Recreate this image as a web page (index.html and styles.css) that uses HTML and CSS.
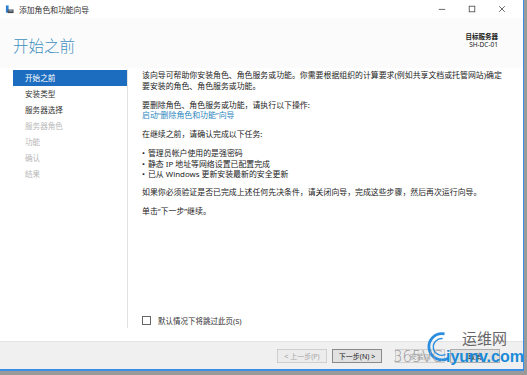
FILE: index.html
```html
<!DOCTYPE html>
<html lang="zh-CN">
<head>
    <meta charset="UTF-8">
    <link rel="stylesheet" href="styles.css">
</head>
<body>

<div class="window">
    <!-- Barra de título -->
    <div class="titlebar">
        <svg class="app-icon" viewBox="0 0 10 10">
            <rect x="1" y="0.5" width="3" height="8" fill="#2b7fd4"/>
            <rect x="3" y="5" width="6.5" height="4" fill="#4a4a4a"/>
            <rect x="4" y="6" width="4.5" height="1" fill="#9ec6ee"/>
        </svg>
        <span class="title-text">添加角色和功能向导</span>
        <div class="controls">
            <span class="ctrl">
                <svg viewBox="0 0 10 10"><line x1="1" y1="5.5" x2="9" y2="5.5" stroke="#444" stroke-width="1"/></svg>
            </span>
            <span class="ctrl">
                <svg viewBox="0 0 10 10"><rect x="1.5" y="1.5" width="7" height="7" fill="none" stroke="#444" stroke-width="1"/></svg>
            </span>
            <span class="ctrl">
                <svg viewBox="0 0 10 10"><path d="M1.5 1.5L8.5 8.5M8.5 1.5L1.5 8.5" stroke="#444" stroke-width="1"/></svg>
            </span>
        </div>
    </div>

    <!-- Cabecera -->
    <div class="header">
        <h1 class="page-title">开始之前</h1>
        <div class="target">
            <div class="target-label">目标服务器</div>
            <div class="target-name">SH-DC-01</div>
        </div>
    </div>

    <!-- Cuerpo -->
    <div class="main">
        <ul class="steps">
            <li class="step active">开始之前</li>
            <li class="step">安装类型</li>
            <li class="step">服务器选择</li>
            <li class="step disabled">服务器角色</li>
            <li class="step disabled">功能</li>
            <li class="step disabled">确认</li>
            <li class="step disabled">结果</li>
        </ul>

        <div class="content">
            <p>该向导可帮助你安装角色、角色服务或功能。你需要根据组织的计算要求(例如共享文档或托管网站)确定<br>要安装的角色、角色服务或功能。</p>
            <p>要删除角色、角色服务或功能，请执行以下操作:<br><a class="link" href="#">启动“删除角色和功能”向导</a></p>
            <p>在继续之前，请确认完成以下任务:</p>
            <ul class="tasks">
                <li>管理员帐户使用的是强密码</li>
                <li>静态 IP 地址等网络设置已配置完成</li>
                <li>已从 Windows 更新安装最新的安全更新</li>
            </ul>
            <p>如果你必须验证是否已完成上述任何先决条件，请关闭向导，完成这些步骤，然后再次运行向导。</p>
            <p>单击“下一步”继续。</p>

            <label class="skip">
                <span class="checkbox"></span>
                默认情况下将跳过此页(S)
            </label>
        </div>
    </div>

    <!-- Pie con botones -->
    <div class="footer">
        <button class="btn" disabled>&lt; 上一步(P)</button>
        <button class="btn primary">下一步(N) &gt;</button>
        <button class="btn install" disabled>安装(I)</button>
        <button class="btn">取消</button>
    </div>

    <!-- Marca de agua -->
    <div class="watermark">
        <svg class="wm-logo" viewBox="0 0 30 36">
            <path d="M22 4 A14 14 0 1 0 26 30" fill="none" stroke="#2a8ee0" stroke-width="3"/>
            <path d="M20 9 A9 9 0 1 0 23 26" fill="none" stroke="#2a8ee0" stroke-width="1.5"/>
        </svg>
        <span class="wm-cn">运维网</span>
        <span class="wm-num">365VC</span>
        <span class="wm-url">iyunv.com</span>
    </div>
</div>

</body>
</html>
```

FILE: styles.css
```css
/* Generales */
body {
    margin: 0;
    width: 527px;
    height: 375px;
    background-color: #9a9a9a;
    font-family: "Noto Sans", "Noto Sans CJK SC", sans-serif;
    overflow: hidden;
}

.window {
    position: relative;
    width: 523px;
    height: 369px;
    background: white;
    border-right: 1px solid #3a8ee6;
    border-bottom: 2px solid #3a8ee6;
    display: flex;
    flex-direction: column;
}

/* Barra de título */
.titlebar {
    height: 18px;
    display: flex;
    align-items: center;
    padding-left: 5px;
    flex-shrink: 0;
}

.app-icon {
    width: 9px;
    height: 9px;
}

.title-text {
    margin-left: 5px;
    font-size: 7.8px;
    color: #333;
}

.controls {
    margin-left: auto;
    display: flex;
    padding-right: 6px;
}

.ctrl {
    width: 30px;
    height: 18px;
    display: flex;
    align-items: center;
    justify-content: center;
}

.ctrl svg {
    width: 8px;
    height: 8px;
}

/* Cabecera */
.header {
    height: 50px;
    flex-shrink: 0;
    background: #fbfbfb;
    display: flex;
    align-items: center;
    padding: 0 25px 0 13px;
}

.page-title {
    margin: 5px 0 0;
    font-size: 15.5px;
    font-weight: 300;
    color: #3f8fc0;
}

.target {
    margin-left: auto;
    text-align: right;
    font-size: 6.5px;
    line-height: 8px;
    color: #222;
    margin-top: -5px;
}

.target-label {
    font-weight: bold;
}

/* Cuerpo */
.main {
    flex: 1;
    display: flex;
}

.steps {
    list-style: none;
    margin: 2px 0 0;
    padding: 0 0 0 13px;
    width: 114px;
    height: 258px;
    border-right: 1px solid #e2e2e2;
    font-size: 7.6px;
}

.step {
    height: 16px;
    line-height: 16px;
    padding-left: 12px;
    color: #333;
}

.step.active {
    background-color: #1c6dbf;
    color: white;
}

.step.disabled {
    color: #b8b8b8;
}

.content {
    flex: 1;
    display: flex;
    flex-direction: column;
    padding: 2px 10px 15px 14px;
    font-size: 7.9px;
    line-height: 10.5px;
    color: #222;
    white-space: nowrap;
}

.content p {
    margin: 0 0 8.5px;
}

.link {
    color: #2a86c0;
    text-decoration: none;
}

.tasks {
    list-style: none;
    margin: 0 0 7px;
    padding: 0;
}

.tasks li::before {
    content: "•";
    margin-right: 3px;
}

.skip {
    margin-top: auto;
    display: flex;
    align-items: center;
    gap: 7px;
    color: #333;
    font-size: 7.5px;
}

.checkbox {
    width: 7px;
    height: 7px;
    border: 1px solid #666;
    background: white;
}

/* Pie */
.footer {
    height: 27px;
    flex-shrink: 0;
    background-color: #f0f0f0;
    border-top: 1px solid #e3e3e3;
    display: flex;
    align-items: center;
    padding-left: 277px;
    gap: 5px;
}

.btn {
    width: 50px;
    height: 14px;
    padding: 0;
    font-family: inherit;
    font-size: 7px;
    background-color: #e1e1e1;
    border: 1px solid #adadad;
    color: #222;
}

.btn:disabled {
    background-color: #ececec;
    border-color: #cfcfcf;
    color: #a6a6a6;
}

.btn.primary {
    border-color: #8a8a8a;
}

.btn.install {
    margin-left: 8px;
}

/* Marca de agua */
.watermark {
    position: absolute;
    left: 393px;
    top: 326px;
    width: 130px;
    height: 44px;
}

.wm-logo {
    position: absolute;
    left: 31px;
    top: 3px;
    width: 28px;
    height: 36px;
}

.wm-cn {
    position: absolute;
    left: 69px;
    top: 4px;
    font-size: 15px;
    line-height: 16px;
    color: #666;
    font-family: "Noto Sans CJK SC", sans-serif;
}

.wm-num {
    position: absolute;
    left: 0;
    top: 22px;
    font-size: 15px;
    line-height: 18px;
    color: #9a9a9a;
    font-family: "DejaVu Sans", sans-serif;
    font-weight: 300;
}

.wm-url {
    position: absolute;
    left: 53px;
    top: 22px;
    font-size: 16px;
    line-height: 18px;
    color: #1a8ad8;
    font-family: "Liberation Sans", sans-serif;
    font-weight: bold;
}
```
